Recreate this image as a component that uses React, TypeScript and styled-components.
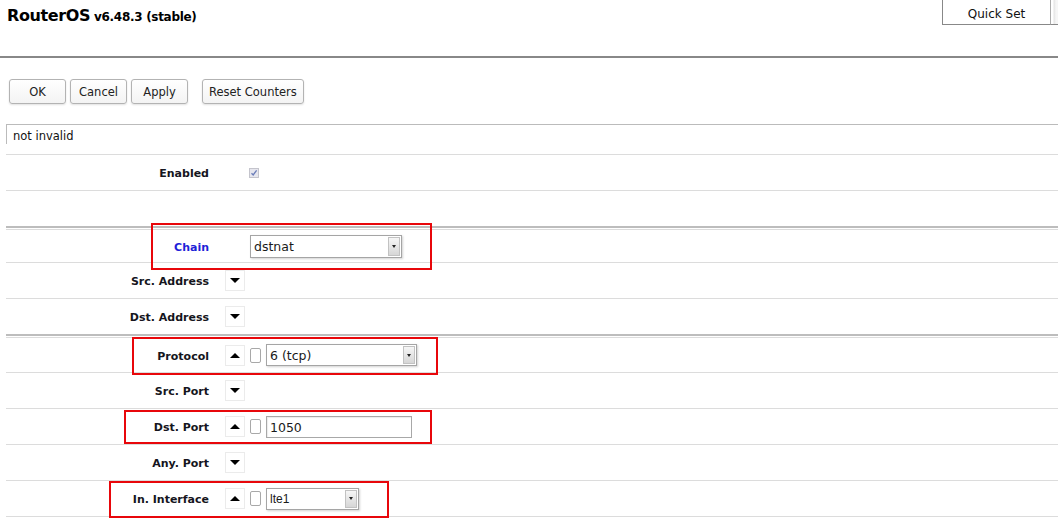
import React from 'react';
import styled, { createGlobalStyle } from 'styled-components';

const GlobalStyle = createGlobalStyle`
  html, body {
    margin: 0;
    padding: 0;
    background: #fff;
  }
  body {
    font-family: "DejaVu Sans", Verdana, sans-serif;
    color: #111;
  }
`;

const Page = styled.div`
  position: relative;
  width: 1058px;
  height: 519px;
  overflow: hidden;
`;

const Header = styled.div`
  display: flex;
  justify-content: space-between;
  align-items: flex-start;
  height: 56px;
`;

const Title = styled.div`
  padding: 6px 0 0 7px;
  font-size: 16px;
  font-weight: bold;
  letter-spacing: -0.4px;
  color: #000;

  small {
    font-size: 12px;
    letter-spacing: -0.3px;
    margin-left: 4px;
  }
`;

const Tabs = styled.div`
  display: flex;
  height: 25px;
`;

const Tab = styled.div<{ $width: number; $faded?: boolean }>`
  display: flex;
  align-items: center;
  justify-content: center;
  width: ${({ $width }) => $width}px;
  height: 25px;
  box-sizing: border-box;
  padding-top: 3px;
  border-left: 1px solid ${({ $faded }) => ($faded ? '#aaa' : '#888')};
  border-bottom: 1px solid #888;
  font-size: 12px;
  color: #111;
  background: ${({ $faded }) =>
    $faded ? 'linear-gradient(90deg, #fff 0, #fff 2px, #e4e4e4 3px, #f6f6f6 5px)' : '#fff'};
`;

const Rule = styled.div`
  height: 2px;
  background: #888;
`;

const Toolbar = styled.div`
  display: flex;
  align-items: center;
  padding: 21px 0 20px 9px;
`;

const Button = styled.button<{ $gap?: number }>`
  height: 25px;
  min-width: 57px;
  margin-right: ${({ $gap }) => $gap ?? 4}px;
  padding: 1px 6px 0;
  border: 1px solid #b3b3b3;
  border-radius: 3px;
  background: linear-gradient(#ffffff, #f3f3f3);
  box-shadow: 0 1px 2px rgba(0, 0, 0, 0.12);
  font-family: "DejaVu Sans", Verdana, sans-serif;
  font-size: 11.5px;
  color: #222;
`;

const Form = styled.div`
  margin-left: 6px;
`;

const Section = styled.div`
  border-top: 2px solid #bdbdbd;
  padding-top: 1px;
`;

const SectionInner = styled.div`
  border-top: 1px solid #dcdcdc;
`;

const CommentRow = styled.div`
  height: 31px;
  box-sizing: border-box;
  border-bottom: 1px solid #dcdcdc;
`;

const CommentBox = styled.div`
  height: 20px;
  box-sizing: border-box;
  border-top: 1px solid #bbb;
  border-left: 1px solid #bbb;
  padding: 4px 0 0 6px;
  font-size: 11.5px;
  color: #111;
`;

const Row = styled.div<{ $height?: number; $noLine?: boolean }>`
  display: grid;
  grid-template-columns: 219px 1fr;
  align-items: center;
  height: ${({ $height }) => $height ?? 36}px;
  box-sizing: border-box;
  border-bottom: ${({ $noLine }) => ($noLine ? 'none' : '1px solid #dcdcdc')};
`;

const Label = styled.div<{ $accent?: boolean }>`
  padding: 2px 16px 0 0;
  text-align: right;
  font-size: 11px;
  font-weight: bold;
  color: ${({ $accent }) => ($accent ? '#1f1fd8' : '#151520')};
`;

const Field = styled.div`
  display: flex;
  align-items: center;
  gap: 5px;
`;

const Spacer = styled.span`
  width: 20px;
`;

const Toggle = styled.span<{ $up?: boolean }>`
  display: flex;
  align-items: center;
  justify-content: center;
  width: 20px;
  height: 21px;
  box-sizing: border-box;
  border: 1px solid #ebebeb;
  background: #fff;

  &::after {
    content: '';
    border-left: 5px solid transparent;
    border-right: 5px solid transparent;
    ${({ $up }) => ($up ? 'border-bottom: 5px solid #000;' : 'border-top: 5px solid #000;')}
  }
`;

const Box = styled.span`
  width: 11px;
  height: 15px;
  box-sizing: border-box;
  border: 1px solid #a8a8a8;
  border-radius: 2px;
  background: #fff;
`;

const Check = styled.span`
  display: flex;
  align-items: center;
  justify-content: center;
  width: 10px;
  height: 10px;
  margin-left: -1px;
  box-sizing: border-box;
  border: 1px solid #c4c4cc;
  background: #e6e6ee;
`;

const Select = styled.div<{ $width: number; $height: number }>`
  display: flex;
  align-items: stretch;
  width: ${({ $width }) => $width}px;
  height: ${({ $height }) => $height}px;
  box-sizing: border-box;
  border: 1px solid #a5a5a5;
  background: #fff;
  box-shadow: 1px 1px 2px rgba(0, 0, 0, 0.18);
`;

const SelectText = styled.span<{ $narrow?: boolean }>`
  flex: 1;
  display: flex;
  align-items: center;
  padding: 1px 0 0 3px;
  font-family: ${({ $narrow }) =>
    $narrow ? '"Liberation Sans", Arial, sans-serif' : '"DejaVu Sans", Verdana, sans-serif'};
  font-size: ${({ $narrow }) => ($narrow ? 12 : 12.5)}px;
  color: #1a1a1a;
`;

const SelectArrow = styled.span`
  display: flex;
  align-items: center;
  justify-content: center;
  width: 10px;
  margin: 1px;
  border: 1px solid #c2c2c2;
  background: linear-gradient(#f6f6f6, #d6d6d6);

  &::after {
    content: '';
    border-left: 2.5px solid transparent;
    border-right: 2.5px solid transparent;
    border-top: 3px solid #222;
  }
`;

const TextInput = styled.div<{ $width: number }>`
  display: flex;
  align-items: center;
  width: ${({ $width }) => $width}px;
  height: 22px;
  box-sizing: border-box;
  padding: 1px 0 0 3px;
  border: 1px solid #a8a8a8;
  box-shadow: inset 1px 1px 1px rgba(0, 0, 0, 0.08);
  font-size: 12.5px;
  color: #1a1a1a;
`;

const Highlight = styled.div`
  position: absolute;
  box-sizing: border-box;
  border: 2px solid #e8070b;
  pointer-events: none;
`;

const marks = [
  { left: 151, top: 223, width: 281, height: 47 },
  { left: 132, top: 337, width: 306, height: 38 },
  { left: 124, top: 410, width: 308, height: 34 },
  { left: 109, top: 481, width: 280, height: 37 },
];

const Dropdown = ({ value, width, height, narrow }: { value: string; width: number; height: number; narrow?: boolean }) => (
  <Select $width={width} $height={height}>
    <SelectText $narrow={narrow}>{value}</SelectText>
    <SelectArrow />
  </Select>
);

const App = () => {
  return (
    <Page>
      <GlobalStyle />
      <Header>
        <Title>
          RouterOS<small>v6.48.3 (stable)</small>
        </Title>
        <Tabs>
          <Tab $width={108}>Quick Set</Tab>
          <Tab $width={8} $faded />
        </Tabs>
      </Header>
      <Rule />
      <Toolbar>
        <Button>OK</Button>
        <Button>Cancel</Button>
        <Button $gap={14}>Apply</Button>
        <Button>Reset Counters</Button>
      </Toolbar>

      <Form>
        <CommentRow>
          <CommentBox>not invalid</CommentBox>
        </CommentRow>
        <Row>
          <Label>Enabled</Label>
          <Field>
            <Spacer />
            <Check>
              <svg width="8" height="8" viewBox="0 0 8 8">
                <path d="M1.5 4.2 L3.2 6 L6.6 1.4" fill="none" stroke="#6a7cb8" strokeWidth="1.3" />
              </svg>
            </Check>
          </Field>
        </Row>
        <Row $height={35} $noLine />

        <Section>
          <SectionInner>
            <Row $height={33}>
              <Label $accent>Chain</Label>
              <Field>
                <Spacer />
                <Dropdown value="dstnat" width={152} height={23} />
              </Field>
            </Row>
            <Row>
              <Label>Src. Address</Label>
              <Field>
                <Toggle />
              </Field>
            </Row>
            <Row $height={35} $noLine>
              <Label>Dst. Address</Label>
              <Field>
                <Toggle />
              </Field>
            </Row>
          </SectionInner>
        </Section>

        <Section>
          <SectionInner>
            <Row $height={35}>
              <Label>Protocol</Label>
              <Field>
                <Toggle $up />
                <Box />
                <Dropdown value="6 (tcp)" width={151} height={22} />
              </Field>
            </Row>
            <Row>
              <Label>Src. Port</Label>
              <Field>
                <Toggle />
              </Field>
            </Row>
            <Row>
              <Label>Dst. Port</Label>
              <Field>
                <Toggle $up />
                <Box />
                <TextInput $width={146}>1050</TextInput>
              </Field>
            </Row>
            <Row>
              <Label>Any. Port</Label>
              <Field>
                <Toggle />
              </Field>
            </Row>
            <Row>
              <Label>In. Interface</Label>
              <Field>
                <Toggle $up />
                <Box />
                <Dropdown value="lte1" width={93} height={22} narrow />
              </Field>
            </Row>
          </SectionInner>
        </Section>
      </Form>

      {marks.map((m, i) => (
        <Highlight key={i} style={{ left: m.left, top: m.top, width: m.width, height: m.height }} />
      ))}
    </Page>
  );
};

export default App;
